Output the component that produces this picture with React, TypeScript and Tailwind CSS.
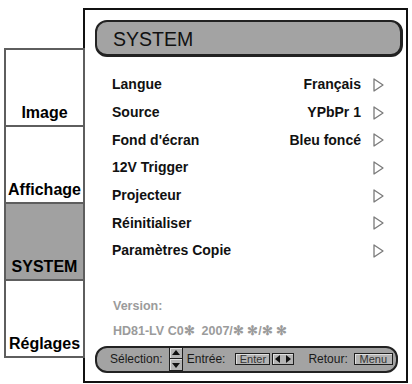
const font = "font-['Liberation_Sans',Arial,sans-serif]";

const rows: Array<{ label: string; value?: string }> = [
  { label: "Langue", value: "Français" },
  { label: "Source", value: "YPbPr 1" },
  { label: "Fond d'écran", value: "Bleu foncé" },
  { label: "12V Trigger" },
  { label: "Projecteur" },
  { label: "Réinitialiser" },
  { label: "Paramètres Copie" },
];

const tabs = [
  { label: "Image", active: false },
  { label: "Affichage", active: false },
  { label: "SYSTEM", active: true },
  { label: "Réglages", active: false },
];

function Chevron() {
  return (
    <svg width="11" height="14" viewBox="0 0 11 14" className="shrink-0">
      <polygon
        points="1,1 10,7 1,13"
        fill="none"
        stroke="#7a7a7a"
        strokeWidth="1.3"
        strokeLinejoin="round"
      />
    </svg>
  );
}

function Key({ children, className }: { children: React.ReactNode; className?: string }) {
  return (
    <div
      className={`flex items-center justify-center h-[12px] border border-[#1e1e1e] bg-[#b4b4b4] shadow-[inset_1px_1px_0_#e0e0e0] text-[11px] leading-none text-[#333] ${className ?? ""}`}
    >
      {children}
    </div>
  );
}

function Tri({ dir }: { dir: "up" | "down" | "left" | "right" }) {
  const pts = {
    up: "1,7 5,2 9,7",
    down: "1,3 5,8 9,3",
    left: "7,1 2,5 7,9",
    right: "3,1 8,5 3,9",
  }[dir];
  return (
    <svg width="10" height="10" viewBox="0 0 10 10">
      <polygon points={pts} fill="#111" />
    </svg>
  );
}

function Tabs() {
  return (
    <div className="relative z-10 ml-[4px] mt-[48px] flex h-[310px] w-[81px] flex-col border-2 border-[#5e5e5e] bg-white">
      {tabs.map((t, i) => (
        <div
          key={t.label}
          className={`flex flex-1 items-end justify-center pb-[3px] ${
            i > 0 ? "border-t-2 border-[#5e5e5e]" : ""
          } ${t.active ? "bg-[#a1a1a1]" : "bg-white"}`}
        >
          <span className="text-[16px] font-bold leading-[18px] text-black">{t.label}</span>
        </div>
      ))}
    </div>
  );
}

export default function App() {
  return (
    <div className={`flex h-[384px] w-[412px] items-start bg-white ${font}`}>
      <Tabs />
      <div className="-ml-[2px] mt-[8px] flex h-[375px] w-[325px] flex-col border-2 border-[#111] bg-white">
        <div className="ml-[10px] mt-[10px] flex h-[37px] w-[308px] items-center rounded-[12px] border-2 border-[#222] border-b-[3px] border-r-[3px] bg-[#a3a3a3] pl-[16px] pt-[4px]">
          <span className="text-[19.5px] leading-none text-[#111]">SYSTEM</span>
        </div>

        <div className="mt-[14px] flex flex-col">
          {rows.map((r) => (
            <div key={r.label} className="flex h-[27.7px] items-center pl-[27px] pr-[22px]">
              <span className="flex-1 text-[14px] font-bold text-[#111]">{r.label}</span>
              {r.value && (
                <span className="mr-[12px] text-[14px] font-bold text-[#111]">{r.value}</span>
              )}
              <Chevron />
            </div>
          ))}
        </div>

        <div className="mt-[29px] flex h-[25px] items-center pl-[28px] text-[12.5px] font-bold text-[#9b9b9b]">
          Version:
        </div>
        <div className="flex h-[25px] items-center pl-[28px] text-[12.5px] font-bold text-[#9b9b9b]">
          HD81-LV C0✻&nbsp;&nbsp;2007/✻ ✻/✻ ✻
        </div>

        <div className="ml-[10px] mt-[2px] flex h-[27px] w-[303px] items-center rounded-[12px] border-2 border-[#222] bg-[#a3a3a3] pl-[13px] text-[12px] text-[#1a1a1a]">
          <span>Sélection:</span>
          <div className="ml-[6px] flex flex-col">
            <Key className="w-[14px]">
              <Tri dir="up" />
            </Key>
            <Key className="w-[14px] border-t-0">
              <Tri dir="down" />
            </Key>
          </div>
          <span className="ml-[4px]">Entrée:</span>
          <Key className="ml-[10px] w-[35px]">Enter</Key>
          <Key className="ml-[2px] w-[22px] gap-0">
            <Tri dir="left" />
            <Tri dir="right" />
          </Key>
          <span className="ml-[14px]">Retour:</span>
          <Key className="ml-[6px] w-[39px]">Menu</Key>
        </div>
      </div>
    </div>
  );
}
